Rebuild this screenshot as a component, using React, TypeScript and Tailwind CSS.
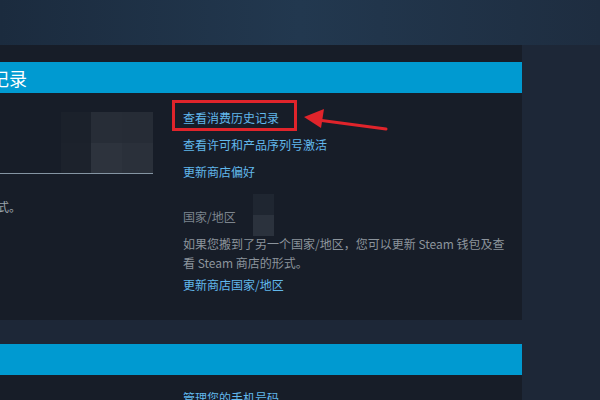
import React from 'react'

const font = { fontFamily: '"Noto Sans CJK SC", "Noto Sans", Arial, sans-serif' }

export default function App() {
  return (
    <div className="relative w-[600px] h-[400px] overflow-hidden bg-[#1d2737]" style={font}>
      {/* Top banner */}
      <div className="h-[45px] bg-gradient-to-r from-[#1b2b3e] via-[#22384f] to-[#1e2d40]" />

      <div className="flex">
        <div className="w-[522px] shrink-0">
          {/* Store and purchase panel */}
          <div className="bg-[#171d28] pt-[17px] h-[275px]">
            <div className="h-[31px] bg-[#009ad1] flex items-center overflow-hidden">
              <span className="text-[18px] text-white whitespace-nowrap ml-[-99px] mt-[2px]">商店与购买记录</span>
            </div>
            <div className="flex">
              <div className="w-[153px] shrink-0">
                <div className="mt-[19px] flex ml-[61px] h-[61px]">
                  <div className="w-[30px] flex flex-col">
                    <div className="flex-1 bg-[#1b212b]" />
                    <div className="flex-1 bg-[#1c222c]" />
                  </div>
                  <div className="w-[31px] flex flex-col">
                    <div className="flex-1 bg-[#272d37]" />
                    <div className="flex-1 bg-[#2d333d]" />
                  </div>
                  <div className="w-[31px] flex flex-col">
                    <div className="flex-1 bg-[#262c36]" />
                    <div className="flex-1 bg-[#2a303a]" />
                  </div>
                </div>
                <div className="h-px bg-[#8595a3]" />
                <p className="mt-[24px] ml-[-3px] text-[12px] leading-[18px] text-[#9aa3ab]">式。</p>
              </div>

              <div className="relative ml-[30px] w-[330px] pt-[11px] text-[12px]">
                <a className="block leading-[27px] text-[#62b8ec]">查看消费历史记录</a>
                <a className="block leading-[27px] text-[#62b8ec]">查看许可和产品序列号激活</a>
                <a className="block leading-[27px] text-[#62b8ec]">更新商店偏好</a>
                <div className="mt-[9px] flex items-start">
                  <span className="leading-[20px] mt-[13px] text-[#7d858e]">国家/地区</span>
                  <div className="ml-[17px] w-[21px] h-[42px] flex flex-col">
                    <div className="flex-1 bg-[#1f2631]" />
                    <div className="flex-1 bg-[#2b323d]" />
                  </div>
                </div>
                <p className="mt-[-2px] leading-[19px] text-[#8c949c]">
                  如果您搬到了另一个国家/地区，您可以更新 Steam 钱包及查看 Steam 商店的形式。
                </p>
                <a className="block mt-[3px] leading-[20px] text-[#62b8ec]">更新商店国家/地区</a>

                {/* Annotation */}
                <div className="absolute left-[-11px] top-[7px] w-[125px] h-[31px] border-[3px] border-[#e0242b]" />
              </div>
            </div>
          </div>

          {/* Phone panel */}
          <div className="mt-[24px] bg-[#171d28] h-[60px]">
            <div className="h-[31px] bg-[#009ad1]" />
            <div className="pl-[183px] pt-[13px] text-[12px] leading-[20px] text-[#62b8ec]">管理您的手机号码</div>
          </div>
        </div>
        <div className="flex-1" />
      </div>

      <svg className="absolute left-0 top-0" width="600" height="400" viewBox="0 0 600 400">
        <line x1="386" y1="129" x2="318" y2="120" stroke="#e0242b" strokeWidth="3" strokeLinecap="round" />
        <polygon points="304,117 324,109 321,128" fill="#e0242b" />
      </svg>
    </div>
  )
}
